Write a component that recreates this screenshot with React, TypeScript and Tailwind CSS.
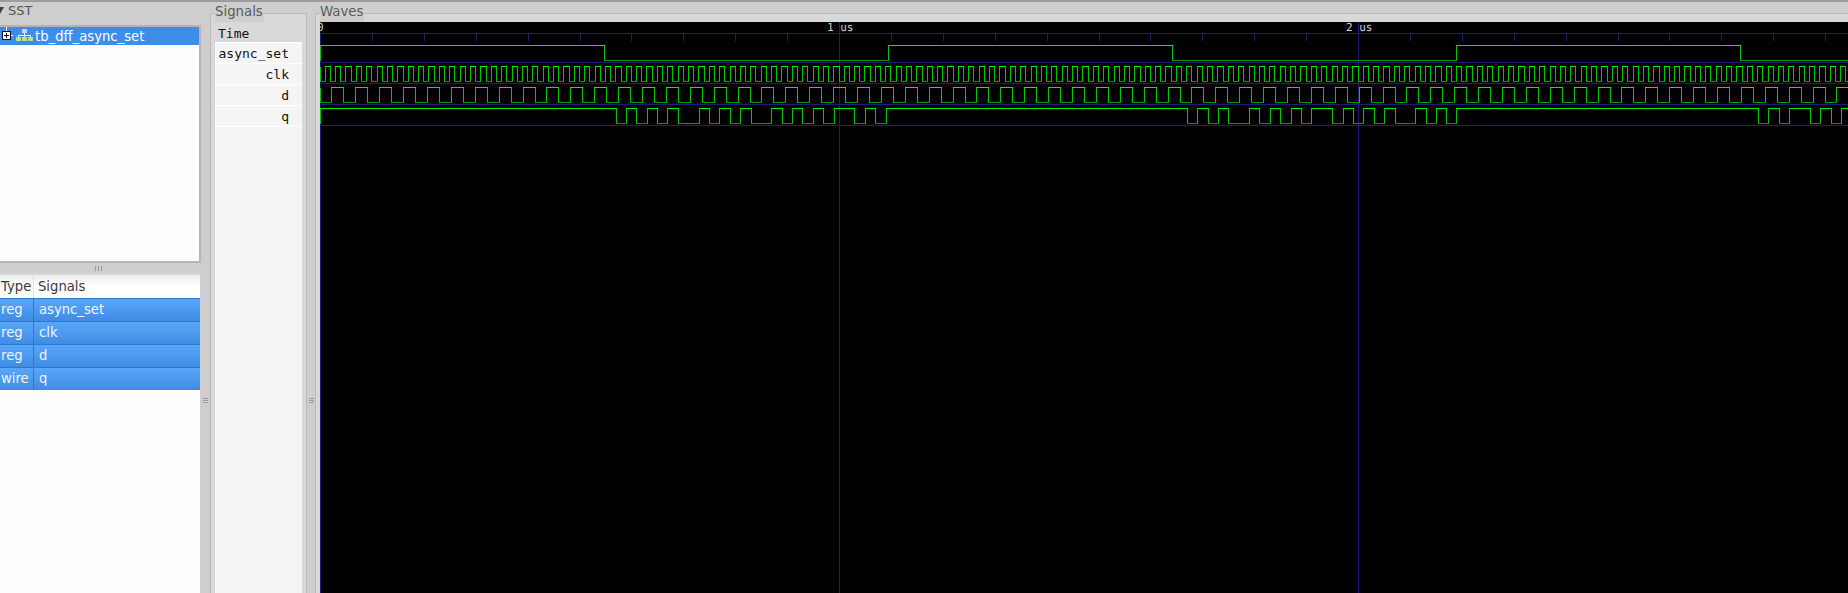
const SANS = "font-['DejaVu_Sans',sans-serif]";

const SIGNAL_ROWS = [
  { type: "reg", name: "async_set" },
  { type: "reg", name: "clk" },
  { type: "reg", name: "d" },
  { type: "wire", name: "q" },
];

const NAMES = ["async_set", "clk", "d", "q"];

const W_END = 1848;
const X0 = 320;

// edges are [x, level after edge]
type Edge = [number, 0 | 1];

function alternating(xs: number[], start: 0 | 1): Edge[] {
  return xs.map((x, i) => [x, (i % 2 === 0 ? start : 1 - start) as 0 | 1]);
}

const ASYNC_EDGES = alternating([604, 888, 1172, 1456, 1740], 0);

const CLK_EDGES: Edge[] = (() => {
  const out: Edge[] = [];
  for (let i = 1; 320 + i * 5.19 < W_END; i++) {
    out.push([Math.floor(320 + i * 5.19), i % 2 === 1 ? 1 : 0]);
  }
  return out;
})();

const D_EDGES: Edge[] = (() => {
  const out: Edge[] = [];
  for (let k = 0; k < 64; k++) {
    const rise = Math.ceil(331 + (k * 215) / 9);
    out.push([rise, 1], [rise + 12, 0]);
  }
  return out.filter(([x]) => x < W_END);
})();

const Q_EDGES = alternating(
  [
    616, 626, 636, 647, 657, 667, 678, 699, 709, 719, 730, 740, 751, 771, 782, 792, 802, 813, 823, 834, 854, 865, 875, 886,
    1187, 1197, 1208, 1218, 1228, 1249, 1259, 1270, 1280, 1291, 1301, 1311, 1332, 1343, 1353, 1363, 1374, 1384, 1395, 1415, 1426, 1436, 1446, 1456,
    1758, 1768, 1779, 1789, 1810, 1820, 1831, 1841,
  ],
  0
);

function Wave({ edges, start, hi, lo }: { edges: Edge[]; start: 0 | 1; hi: number; lo: number }) {
  const high: string[] = [];
  const low: string[] = [];
  const vert: string[] = [`M${X0 + 0.5} ${hi + 0.5}V${lo + 0.5}`];
  let level = start;
  let prev = X0;
  for (const [x, next] of [...edges, [W_END, start] as Edge]) {
    const y = level ? hi : lo;
    (level ? high : low).push(`M${prev} ${y + 0.5}H${x + 1}`);
    if (x < W_END) vert.push(`M${x + 0.5} ${hi + 0.5}V${lo + 0.5}`);
    level = next;
    prev = x;
  }
  return (
    <g fill="none" strokeWidth={1}>
      <path d={vert.join("")} stroke="#00c800" />
      <path d={low.join("")} stroke="#009a00" />
      <path d={high.join("")} stroke="#00f000" />
    </g>
  );
}

function WaveCanvas() {
  const ticks: number[] = [];
  for (let i = 1; i * 51.9 + X0 < W_END; i++) ticks.push(Math.round(X0 + i * 51.9));
  return (
    <svg width={1528} height={571} viewBox="320 22 1528 571" shapeRendering="crispEdges" className="block bg-black">
      <g stroke="#1d1d78" strokeWidth={1} fill="none">
        {[33, 62, 83, 104, 125].map((y) => (
          <path key={y} d={`M320 ${y + 0.5}H1848`} />
        ))}
        {ticks.map((x) => (
          <path key={x} d={`M${x + 0.5} 33V41`} />
        ))}
        <path d="M320.5 33V593" />
        <path d="M839.5 22V593" />
        <path d="M1358.5 22V593" />
      </g>
      <Wave edges={ASYNC_EDGES} start={1} hi={45} lo={60} />
      <Wave edges={CLK_EDGES} start={0} hi={66} lo={81} />
      <Wave edges={D_EDGES} start={0} hi={87} lo={102} />
      <Wave edges={Q_EDGES} start={1} hi={108} lo={123} />
      <g fontFamily="'DejaVu Sans Mono', monospace" fontSize={11} fill="#cfcfcf" textRendering="geometricPrecision">
        <text x={317} y={31}>0</text>
        <text x={827} y={31}>1 us</text>
        <text x={1346} y={31}>2 us</text>
      </g>
    </svg>
  );
}

function TreeIcons() {
  return (
    <svg width={34} height={18} viewBox="0 0 34 18" shapeRendering="crispEdges" className="shrink-0">
      <path d="M6.5 0V4M11 8.5H13" stroke="#fff" />
      <rect x={2.5} y={4.5} width={8} height={8} fill="#fff" stroke="#111" />
      <path d="M4 8.5H9M6.5 6V11" stroke="#111" />
      <path d="M24.5 6V10M18.5 10V8.5H30.5V10" stroke="#e8f2ff" fill="none" />
      <rect x={22} y={2} width={5} height={4} fill="#c6d9ee" />
      <rect x={16} y={10} width={5} height={4} fill="#b8e090" />
      <rect x={22} y={10} width={5} height={4} fill="#b8e090" />
      <rect x={28} y={10} width={5} height={4} fill="#b8e090" />
    </svg>
  );
}

function GripV() {
  return (
    <div className="flex flex-col gap-[1px]">
      <div className="h-[1px] w-[5px] bg-[#9c9c9c]" />
      <div className="h-[1px] w-[5px] bg-[#9c9c9c]" />
      <div className="h-[1px] w-[5px] bg-[#9c9c9c]" />
    </div>
  );
}

function GripH() {
  return (
    <div className="flex gap-[2px]">
      <div className="h-[5px] w-[1px] bg-[#9c9c9c]" />
      <div className="h-[5px] w-[1px] bg-[#9c9c9c]" />
      <div className="h-[5px] w-[1px] bg-[#9c9c9c]" />
    </div>
  );
}

function LeftPane() {
  return (
    <div className="flex w-[201px] shrink-0 flex-col">
      <div className={`flex h-[23px] items-center pb-[6px] text-[13px] text-[#555] ${SANS}`}>
        <svg width={8} height={9} viewBox="0 0 8 9" className="shrink-0">
          <path d="M-4 1H4L0 8Z" fill="#444" />
        </svg>
        <span>SST</span>
      </div>
      <div className="h-[238px] border-t-2 border-r-2 border-b-2 border-[#b4b4b4] bg-[#fdfdfd]">
        <div className={`flex h-[18px] items-center bg-[#3d8ee8] text-[13.2px] leading-[20px] text-white ${SANS}`}>
          <TreeIcons />
          <span className="ml-[1px] pt-[1px]">tb_dff_async_set</span>
        </div>
      </div>
      <div className="flex h-[10px] items-center justify-center pr-[5px]">
        <GripH />
      </div>
      <div className={`mr-[1px] flex-1 border-t-2 border-[#d6d6d6] bg-[#fdfdfd] text-[13.2px] ${SANS}`}>
        <div className="flex h-[23px] bg-gradient-to-b from-[#ececec] via-white to-white text-[#3a3a3a]">
          <div className="w-[34px] border-r border-[#e0e0e0] pl-[1px] leading-[24px]">Type</div>
          <div className="pl-[4px] leading-[24px]">Signals</div>
        </div>
        {SIGNAL_ROWS.map((r) => (
          <div key={r.name} className="flex h-[23px] border-t border-[#2f78d0] bg-gradient-to-b from-[#5aa6f8] to-[#3f8ce6] text-[#eef5ff]">
            <div className="w-[34px] border-r border-[#2f78d0] pl-[1px] leading-[22px]">{r.type}</div>
            <div className="pl-[5px] leading-[22px]">{r.name}</div>
          </div>
        ))}
      </div>
    </div>
  );
}

function SignalsFrame() {
  return (
    <fieldset className="w-[97px] shrink-0 rounded-t-[2px] border-x border-t border-[#b8b8b8] bg-[#d8d8d8] pl-[4px] pr-[4px]">
      <legend className={`h-[18px] bg-[#cecece] pr-[1px] text-[13.3px] leading-[16px] text-[#5a5a5a] ${SANS}`}>Signals</legend>
      <div className="h-[571px] bg-[#f5f5f5] font-['DejaVu_Sans_Mono',monospace] text-[13px] text-[#111]">
        <div className="h-[20px] bg-[#d9d9d9] pl-[3px] leading-[23px]">Time</div>
        {NAMES.map((n) => (
          <div key={n} className="h-[21px] border-t border-white pr-[13px] text-right leading-[22px]">
            {n}
          </div>
        ))}
        <div className="h-0 border-t border-white" />
      </div>
    </fieldset>
  );
}

function WavesFrame() {
  return (
    <fieldset className="min-w-0 flex-1 rounded-tl-[2px] border-l border-t border-[#b8b8b8] bg-[#d8d8d8] pl-[4px]">
      <legend className={`h-[18px] bg-[#cecece] pr-[1px] text-[13.3px] leading-[16px] text-[#5a5a5a] ${SANS}`}>Waves</legend>
      <div className="h-[571px] overflow-hidden">
        <WaveCanvas />
      </div>
    </fieldset>
  );
}

export default function App() {
  return (
    <div className="flex h-[593px] w-[1848px] flex-col overflow-hidden border-t-2 border-[#9c9c9c] bg-[#cecece]">
      <div className="flex min-h-0 flex-1">
        <LeftPane />
        <div className="flex w-[9px] shrink-0 items-end justify-center pb-[190px]">
          <GripV />
        </div>
        <div className="flex pt-[2px]">
          <SignalsFrame />
        </div>
        <div className="flex w-[8px] shrink-0 items-end justify-center pb-[190px]">
          <GripV />
        </div>
        <div className="flex flex-1 pt-[2px]">
          <WavesFrame />
        </div>
      </div>
    </div>
  );
}
